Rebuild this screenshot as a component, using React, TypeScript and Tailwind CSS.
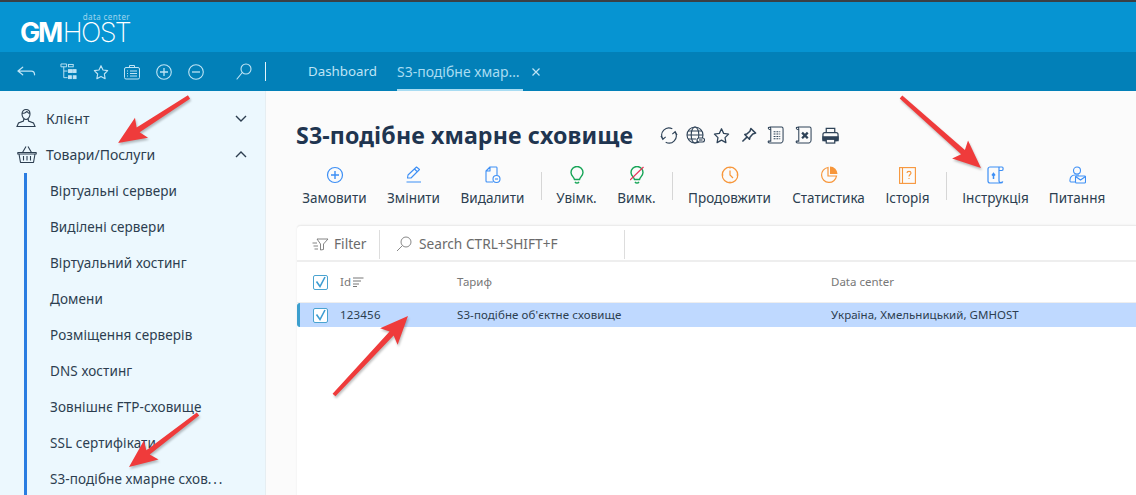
import React from "react";

const font = { fontFamily: '"Noto Sans", sans-serif' };

const Arrow = ({ x1, y1, x2, y2 }: { x1: number; y1: number; x2: number; y2: number }) => {
  const a = Math.atan2(y2 - y1, x2 - x1);
  const ux = Math.cos(a), uy = Math.sin(a);
  const L = 28, W = 12, T = 2.8;
  const bx = x2 - ux * L, by = y2 - uy * L;
  const nx = -uy, ny = ux;
  const p = [
    [x1 + nx * T * 0.7, y1 + ny * T * 0.7],
    [bx + nx * T + ux * 4, by + ny * T + uy * 4],
    [bx + nx * W, by + ny * W],
    [x2, y2],
    [bx - nx * W, by - ny * W],
    [bx - nx * T + ux * 4, by - ny * T + uy * 4],
    [x1 - nx * T * 0.7, y1 - ny * T * 0.7],
  ].map((q) => q.join(",")).join(" ");
  return <polygon points={p} fill="#ef3b3b" />;
};

const NAV = ["Віртуальні сервери", "Виділені сервери", "Віртуальний хостинг", "Домени", "Розміщення серверів", "DNS хостинг", "Зовнішнє FTP-сховище", "SSL сертифікати"];

const BLUE = "#3d8ff5", GREEN = "#18a558", OR = "#f7963a";

const Tool = ({ label, icon, w }: { label: string; icon: React.ReactNode; w: string }) => (
  <div className={`flex flex-col items-center shrink-0 ${w}`}>
    <div className="h-[24px] flex items-center justify-center">{icon}</div>
    <div className="mt-[2px] text-[13.5px] leading-[18px] text-[#2c3e50] whitespace-nowrap">{label}</div>
  </div>
);
const Sep = () => <div className="w-px h-[28px] bg-[#d6d6d6] mt-[9px] ml-[16px] mr-[14px] shrink-0" />;

const Check = () => (
  <div className="w-[15px] h-[15px] border-[1.5px] border-[#4aa3d0] rounded-[2px] flex items-center justify-center bg-white">
    <svg width="13" height="13" viewBox="0 0 13 13" fill="none" stroke="#3d9cd2" strokeWidth="1.6"><path d="M2.5 5.5 L6 10.5 L11 1" /></svg>
  </div>
);

const scroll = "M3 1 H15.5 C17 1 17 3 17 3 V15 C17 15 17 17.5 15 18 H3 C1 18 1 16.5 1.5 16 H4 V3 C4 1.5 3 1 1.5 1.5 C1 2.5 2 4 4 4";

export default function App() {
  return (
    <div style={font} className="relative w-[1136px] h-[495px] overflow-hidden bg-[#fbfbfb]">
      <div className="h-[1.5px] bg-[#3a3f44]" />
      <header className="h-[50.5px] bg-[#0694d2] pl-[20px] pt-[10px]">
        <div className="w-[110px] text-white">
          <div className="text-[8px] leading-[9px] text-right text-[#9fd6ee] tracking-[0.4px]">data center</div>
          <div className="text-[27px] leading-[20px] mt-[2px] whitespace-nowrap" style={{ fontFamily: 'Inter, sans-serif' }}>
            <span className="font-bold tracking-[-2.3px]">GM</span><span className="font-extralight tracking-[-1.7px] ml-[2px]">HOST</span>
          </div>
        </div>
      </header>
      <nav className="h-[39px] bg-[#0280b8] flex items-center text-[#a9dcf2]">
        <div className="ml-[17px] w-[21px]">
          <svg width="19" height="14" viewBox="0 0 20 14" fill="none" stroke="#bfe4f5" strokeWidth="1.3" strokeLinecap="round" strokeLinejoin="round"><path d="M6 2 L1 6 L6 10 M1 6 H15 C17.5 6 18.5 7.5 18.5 10" /></svg>
        </div>
        <div className="ml-[22px] w-[22px]">
          <svg width="17" height="20" viewBox="0 0 18 20" fill="none" stroke="#bfe4f5" strokeWidth="1"><path d="M1 1.5 H7 V4.5 H1 Z M4 4.5 V16 M4 9 H8 M4 16 H8" /><rect x="9" y="2" width="5" height="2.5" /><rect x="9" y="7.5" width="4" height="3" fill="#bfe4f5" /><rect x="14" y="7.5" width="3" height="3" fill="#bfe4f5" /><rect x="9" y="14" width="3" height="3" fill="#bfe4f5" /><rect x="14" y="14" width="3" height="3" fill="#bfe4f5" /></svg>
        </div>
        <div className="ml-[11px] w-[16px]"><svg width="16" height="16" viewBox="0 0 24 24" fill="none" stroke="#bfe4f5" strokeWidth="1.7" strokeLinejoin="round"><path d="M12 2.5 L15 9 L22 10 L17 15 L18.2 22 L12 18.6 L5.8 22 L7 15 L2 10 L9 9 Z" /></svg></div>
        <div className="ml-[15px] w-[16px]"><svg width="16" height="16" viewBox="0 0 16 16" fill="none" stroke="#bfe4f5" strokeWidth="1"><rect x="0.5" y="3.5" width="15" height="11.5" rx="1.5" /><path d="M5.5 3.5 V1.5 H10.5 V3.5 M6 7 H13 M6 9.5 H13 M6 12 H13 M3 7 H4 M3 9.5 H4 M3 12 H4" /></svg></div>
        <div className="ml-[16px]"><svg width="16" height="16" viewBox="0 0 16 16" fill="none" stroke="#bfe4f5" strokeWidth="1.1"><circle cx="8" cy="8" r="7.3" /><path d="M8 4 V12 M4 8 H12" strokeWidth="1.3" /></svg></div>
        <div className="ml-[16px]"><svg width="16" height="16" viewBox="0 0 16 16" fill="none" stroke="#bfe4f5" strokeWidth="1.1"><circle cx="8" cy="8" r="7.3" /><path d="M4 8 H12" strokeWidth="1.3" /></svg></div>
        <div className="ml-[32px]"><svg width="16" height="17" viewBox="0 0 16 17" fill="none" stroke="#bfe4f5" strokeWidth="1.1" strokeLinecap="round"><circle cx="10" cy="6" r="5" /><path d="M6.3 9.5 L1 16" /></svg></div>
        <div className="ml-[13px] w-px h-[19px] bg-[#e3f4fb]" />
        <div className="ml-[42px] w-[69px] text-[13.3px] text-[#bfe4f5] whitespace-nowrap">Dashboard</div>
        <div className="ml-[20px] h-full relative flex items-center w-[126px] text-[14px] text-[#a9dcf2] whitespace-nowrap">
          S3-подібне хмар…
          <div className="absolute left-0 bottom-0 w-[126px] h-[2px] bg-[#a9dcf2]" />
        </div>
        <div className="ml-[8px]"><svg width="10" height="10" viewBox="0 0 10 10" stroke="#bfe4f5" strokeWidth="1.2"><path d="M1.5 1.5 L8.5 8.5 M8.5 1.5 L1.5 8.5" /></svg></div>
      </nav>

      <div className="flex h-[404px]">
        <aside className="w-[266px] shrink-0 bg-[#ecf8fe] border-r border-[#e6eef2] pt-[9px] text-[#2c3e50]">
          <div className="h-[36px] flex items-center pl-[16px] pr-[18px]">
            <svg width="20" height="20" viewBox="0 0 20 20" fill="none" stroke="#2c3e50" strokeWidth="1.1"><path d="M6 6 C6 3 8 1.5 10 1.5 C12 1.5 14 3 14 6 C14 9 12 11.5 10 11.5 C8 11.5 6 9 6 6 Z M6 5.5 C9 5.5 10 4.5 11 3.5 C12 5 13 5.5 14 5.5" /><path d="M7.8 11 L7.5 13 L2.5 15 L1 18.5 H19 L17.5 15 L12.5 13 L12.2 11" /></svg>
            <span className="ml-[10px] text-[14px] tracking-[0.2px] flex-1">Клієнт</span>
            <svg width="12" height="7" viewBox="0 0 12 7" fill="none" stroke="#2c3e50" strokeWidth="1.4"><path d="M1 1 L6 6 L11 1" /></svg>
          </div>
          <div className="h-[36px] flex items-center pl-[17px] pr-[18px]">
            <svg width="20" height="19" viewBox="0 0 20 19" fill="none" stroke="#2c3e50" strokeWidth="1.1" strokeLinejoin="round"><path d="M0.8 7.5 H19.2 V9 H0.8 Z M2 9 L3.5 17.5 H16.5 L18 9 M5.5 7.5 L9 1.5 M14.5 7.5 L11 1.5 M6.5 11 V15.5 M10 11 V15.5 M13.5 11 V15.5" /></svg>
            <span className="ml-[9px] text-[14px] flex-1">Товари/Послуги</span>
            <svg width="12" height="7" viewBox="0 0 12 7" fill="none" stroke="#2c3e50" strokeWidth="1.4"><path d="M1 6 L6 1 L11 6" /></svg>
          </div>
          <div className="ml-[24px] mt-[1px] border-l-[3px] border-[#2a7de1] pl-[23px] h-[400px]">
            {NAV.map((t) => (
              <div key={t} className="h-[36px] flex items-center text-[13.5px] tracking-[0.1px] text-[#2c3e50] whitespace-nowrap">{t}</div>
            ))}
            <div className="h-[36px] flex items-center text-[13.5px] tracking-[0.1px] text-[#2c3e50] whitespace-nowrap">
              S3-подібне хмарне схов<span className="tracking-[1.8px]">...</span>
            </div>
          </div>
        </aside>

        <main className="flex-1 min-w-0 pl-[31px]">
          <div className="flex items-center h-[34px] mt-[27px]">
            <h1 className="-ml-[1px] text-[23.2px] font-bold leading-[34px] text-[#1f3550] whitespace-nowrap tracking-[0.1px]">S3-подібне хмарне сховище</h1>
            <div className="ml-[27px] flex items-center text-[#2f4358]">
              <svg width="18" height="19" viewBox="0 0 19 19" fill="none" stroke="#2f4358" strokeWidth="1.2"><path d="M3 13 A7.5 7.5 0 0 1 13 2.5 M16 6 A7.5 7.5 0 0 1 6 16.5 M1 10 L3 13.5 L6 11 M18 9 L16 5.5 L13 8" /></svg>
              <svg className="ml-[8px]" width="19" height="19" viewBox="0 0 19 19" fill="none" stroke="#2f4358" strokeWidth="1.1"><circle cx="9" cy="9" r="8" /><ellipse cx="9" cy="9" rx="3.8" ry="8" /><path d="M1 9 H17 M2 5 H16 M2 13 H10" /><rect x="11" y="12" width="7.5" height="4" rx="2" fill="#fbfbfb" /><path d="M13 14 H16.5" /></svg>
              <svg className="ml-[8px]" width="17" height="17" viewBox="0 0 24 24" fill="none" stroke="#2f4358" strokeWidth="1.8" strokeLinejoin="round"><path d="M12 2.5 L15 9 L22 10 L17 15 L18.2 22 L12 18.6 L5.8 22 L7 15 L2 10 L9 9 Z" /></svg>
              <svg className="ml-[11px]" width="16" height="16" viewBox="0 0 17 17" fill="none" stroke="#2f4358" strokeWidth="1.6" strokeLinejoin="round"><path d="M10.5 1.5 L15.5 6.5 L12.5 7.5 L9.5 11 L9 13 L4 8 L6 7.5 L9.5 4.5 Z M6 11 L1.5 15.5" /></svg>
              <svg className="ml-[10px]" width="17" height="18" viewBox="0 0 18 19" fill="none" stroke="#2f4358" strokeWidth="1.1"><path d={scroll} /><path d="M7 6 H14 M7 8.5 H14 M7 11 H14 M7 13.5 H14" strokeDasharray="2 1" /></svg>
              <svg className="ml-[11px]" width="17" height="18" viewBox="0 0 18 19" fill="none" stroke="#2f4358" strokeWidth="1.1"><path d={scroll} /><path d="M7.5 7 L13.5 13 M13.5 7 L7.5 13" strokeWidth="2.4" /></svg>
              <svg className="ml-[10px]" width="17" height="17" viewBox="0 0 18 18" fill="none" stroke="#2f4358" strokeWidth="1.3"><path d="M4.5 6 V1.5 H13.5 V6" /><rect x="1" y="6" width="16" height="8.5" rx="2" /><path d="M1 10.5 H17 V14.5 H1 Z" fill="#2f4358" /><rect x="4.5" y="13" width="9" height="4" fill="#fbfbfb" /></svg>
            </div>
          </div>

          <div className="flex mt-[11px] h-[47px] pl-[5px]">
            <Tool w="w-[65px]" label="Замовити" icon={<svg width="18" height="18" viewBox="0 0 18 18" fill="none" stroke={BLUE} strokeWidth="1.2"><circle cx="9" cy="9" r="7.5" /><path d="M9 5 V13 M5 9 H13" strokeWidth="1.4" /></svg>} />
            <div className="w-[20px]" />
            <Tool w="w-[53px]" label="Змінити" icon={<svg width="16" height="18" viewBox="0 0 16 18" fill="none" stroke={BLUE} strokeWidth="1.1" strokeLinejoin="round"><path d="M1.5 12 L2 9 L10.5 1 L13.5 3.5 L5 12 Z M8.5 3 L11.5 6 M0.5 16 H15" /></svg>} />
            <div className="w-[20px]" />
            <Tool w="w-[65px]" label="Видалити" icon={<svg width="16" height="18" viewBox="0 0 16 18" fill="none" stroke={BLUE} strokeWidth="1.1" strokeLinejoin="round"><path d="M8 16 H2 C1 16 1 15 1 15 V5 L5 1 H11.5 C12 1 12 1.5 12 2 V9 M5 1 V5 H1" /><circle cx="11.5" cy="13" r="3.5" /><path d="M10 13 H13" /></svg>} />
            <Sep />
            <Tool w="w-[41px]" label="Увімк." icon={<svg width="14" height="19" viewBox="0 0 14 19" fill="none" stroke={GREEN} strokeWidth="1.4"><path d="M4.5 13.5 C4 11 1 9.5 1 6.5 A6 6 0 0 1 13 6.5 C13 9.5 10 11 9.5 13.5 Z M5 16 C6 17.5 8 17.5 9 16" /></svg>} />
            <div className="w-[20px]" />
            <Tool w="w-[39px]" label="Вимк." icon={<svg width="14" height="19" viewBox="0 0 14 19" fill="none" stroke={GREEN} strokeWidth="1.4"><path d="M4.5 13.5 C4 11 1 9.5 1 6.5 A6 6 0 0 1 13 6.5 C13 9.5 10 11 9.5 13.5 Z M5 16 C6 17.5 8 17.5 9 16" /><path d="M0 14 L13.5 1" stroke="#e8335a" strokeWidth="1.2" /></svg>} />
            <Sep />
            <Tool w="w-[85px]" label="Продовжити" icon={<svg width="18" height="18" viewBox="0 0 18 18" fill="none" stroke={OR} strokeWidth="1.2"><circle cx="9" cy="9" r="7.8" /><path d="M9 4.5 V9 L12 12 M9 1 V2.5 M9 15.5 V17 M1 9 H2.5 M15.5 9 H17" /></svg>} />
            <div className="w-[20px]" />
            <Tool w="w-[73px]" label="Статистика" icon={<svg width="18" height="18" viewBox="0 0 18 18" fill="none" stroke={OR} strokeWidth="1.2"><path d="M8 1.5 A7.5 7.5 0 1 0 16.5 10 H8 Z" /><path d="M10 0.5 A7.5 7.5 0 0 1 17.5 8 H10 Z" fill={OR} stroke="none" /></svg>} />
            <div className="w-[20px]" />
            <Tool w="w-[45px]" label="Історія" icon={<svg width="17" height="17" viewBox="0 0 17 17" fill="none" stroke={OR} strokeWidth="1.1"><rect x="0.6" y="0.6" width="15.8" height="15.8" /><path d="M3.5 0.6 V16.4" /><path d="M8 6 C8 3.8 12 3.8 12 6 C12 7.5 10 7.5 10 9.5 M10 11 V12" /></svg>} />
            <Sep />
            <div className="w-px" />
            <Tool w="w-[67px]" label="Інструкція" icon={<svg width="17" height="18" viewBox="0 0 17 18" fill="none" stroke={BLUE} strokeWidth="1.2"><path d="M3 1 H12 V15 C12 16.5 13.5 17 15.5 16 C15.5 17 14.5 17 13.5 17 H3 C1.5 17 1 16 1 15 V3 C1 2 2 1 3 1 Z M12 4.5 H15 C16.5 4.5 16.5 1 15 1 H12" /><path d="M6.5 13 V8 M5 9.5 L6.5 7.5 L8 9.5" strokeWidth="1.5" /></svg>} />
            <div className="w-[20px]" />
            <Tool w="w-[56px]" label="Питання" icon={<svg width="17" height="18" viewBox="0 0 17 18" fill="none" stroke={BLUE} strokeWidth="1.1"><circle cx="8" cy="4.5" r="3.5" /><path d="M6 16 H2 C1 16 0.8 15 1 14 C1 11 3 9 6 9 H10" /><rect x="6.5" y="10" width="10" height="7" rx="1" fill="#fbfbfb" /><path d="M6.5 10.5 L11.5 14 L16.5 10.5" /></svg>} />
          </div>

          <section className="mt-[15px] h-[300px] bg-white border-t border-[#ececec] rounded-tl-[4px] shadow-[0_0_2px_rgba(0,0,0,0.08)]">
            <div className="h-[36px] pt-[2px] flex items-center border-b-[2px] border-[#eeeeee] text-[13.7px] text-[#6b6b6b]">
              <div className="w-[83px] h-[29px] pl-[15px] border-r border-[#dddddd] flex items-center gap-[5px]">
                <svg width="17" height="13" viewBox="0 0 17 13" fill="none" stroke="#777" strokeWidth="0.9"><path d="M0.5 5 H5 M1.5 8 H6 M2.5 11 H6 M5 1 H16 L11.5 6 V11.5 L8.5 12 V6 Z" /></svg>
                Filter
              </div>
              <div className="w-[245px] h-[29px] pl-[16px] border-r border-[#dddddd] flex items-center gap-[7px] whitespace-nowrap">
                <svg width="16" height="16" viewBox="0 0 16 16" fill="none" stroke="#888" strokeWidth="1"><circle cx="10" cy="6" r="5" /><path d="M6.5 9.5 L1 15" /></svg>
                Search CTRL+SHIFT+F
              </div>
            </div>
            <div className="h-[41px] flex items-center border-b border-[#eeeeee] text-[11.5px] text-[#777777]">
              <div className="w-[43px] pl-[16px] shrink-0"><Check /></div>
              <div className="w-[117px] shrink-0 flex items-center gap-[2px]">Id
                <svg width="11" height="10" viewBox="0 0 11 10" stroke="#777" strokeWidth="1"><path d="M0 1 H10.5 M0 4 H8 M0 7 H6 M0 9.5 H4" /></svg>
              </div>
              <div className="w-[374px] shrink-0">Тариф</div>
              <div>Data center</div>
            </div>
            <div className="h-[24px] flex items-center bg-[#bfd9ff] border-l-[3px] border-[#3c9fce] rounded-l-[3px] text-[11.5px] text-[#2c3e50]">
              <div className="w-[40px] pl-[13px] shrink-0"><Check /></div>
              <div className="w-[117px] shrink-0 tracking-[0.2px]">123456</div>
              <div className="w-[374px] shrink-0 tracking-[0.1px]">S3-подібне об'єктне сховище</div>
              <div className="tracking-[0.03px]">Україна, Хмельницький, GMHOST</div>
            </div>
          </section>
        </main>
      </div>

      <svg className="absolute inset-0 pointer-events-none drop-shadow-[1px_2px_1px_rgba(0,0,0,0.25)]" width="1136" height="495">
        <Arrow x1={189} y1={97} x2={118} y2={143} />
        <Arrow x1={901} y1={97} x2={981} y2={168} />
        <Arrow x1={334} y1={395} x2={408} y2={316} />
        <Arrow x1={198} y1={414} x2={129} y2={467} />
      </svg>
    </div>
  );
}
